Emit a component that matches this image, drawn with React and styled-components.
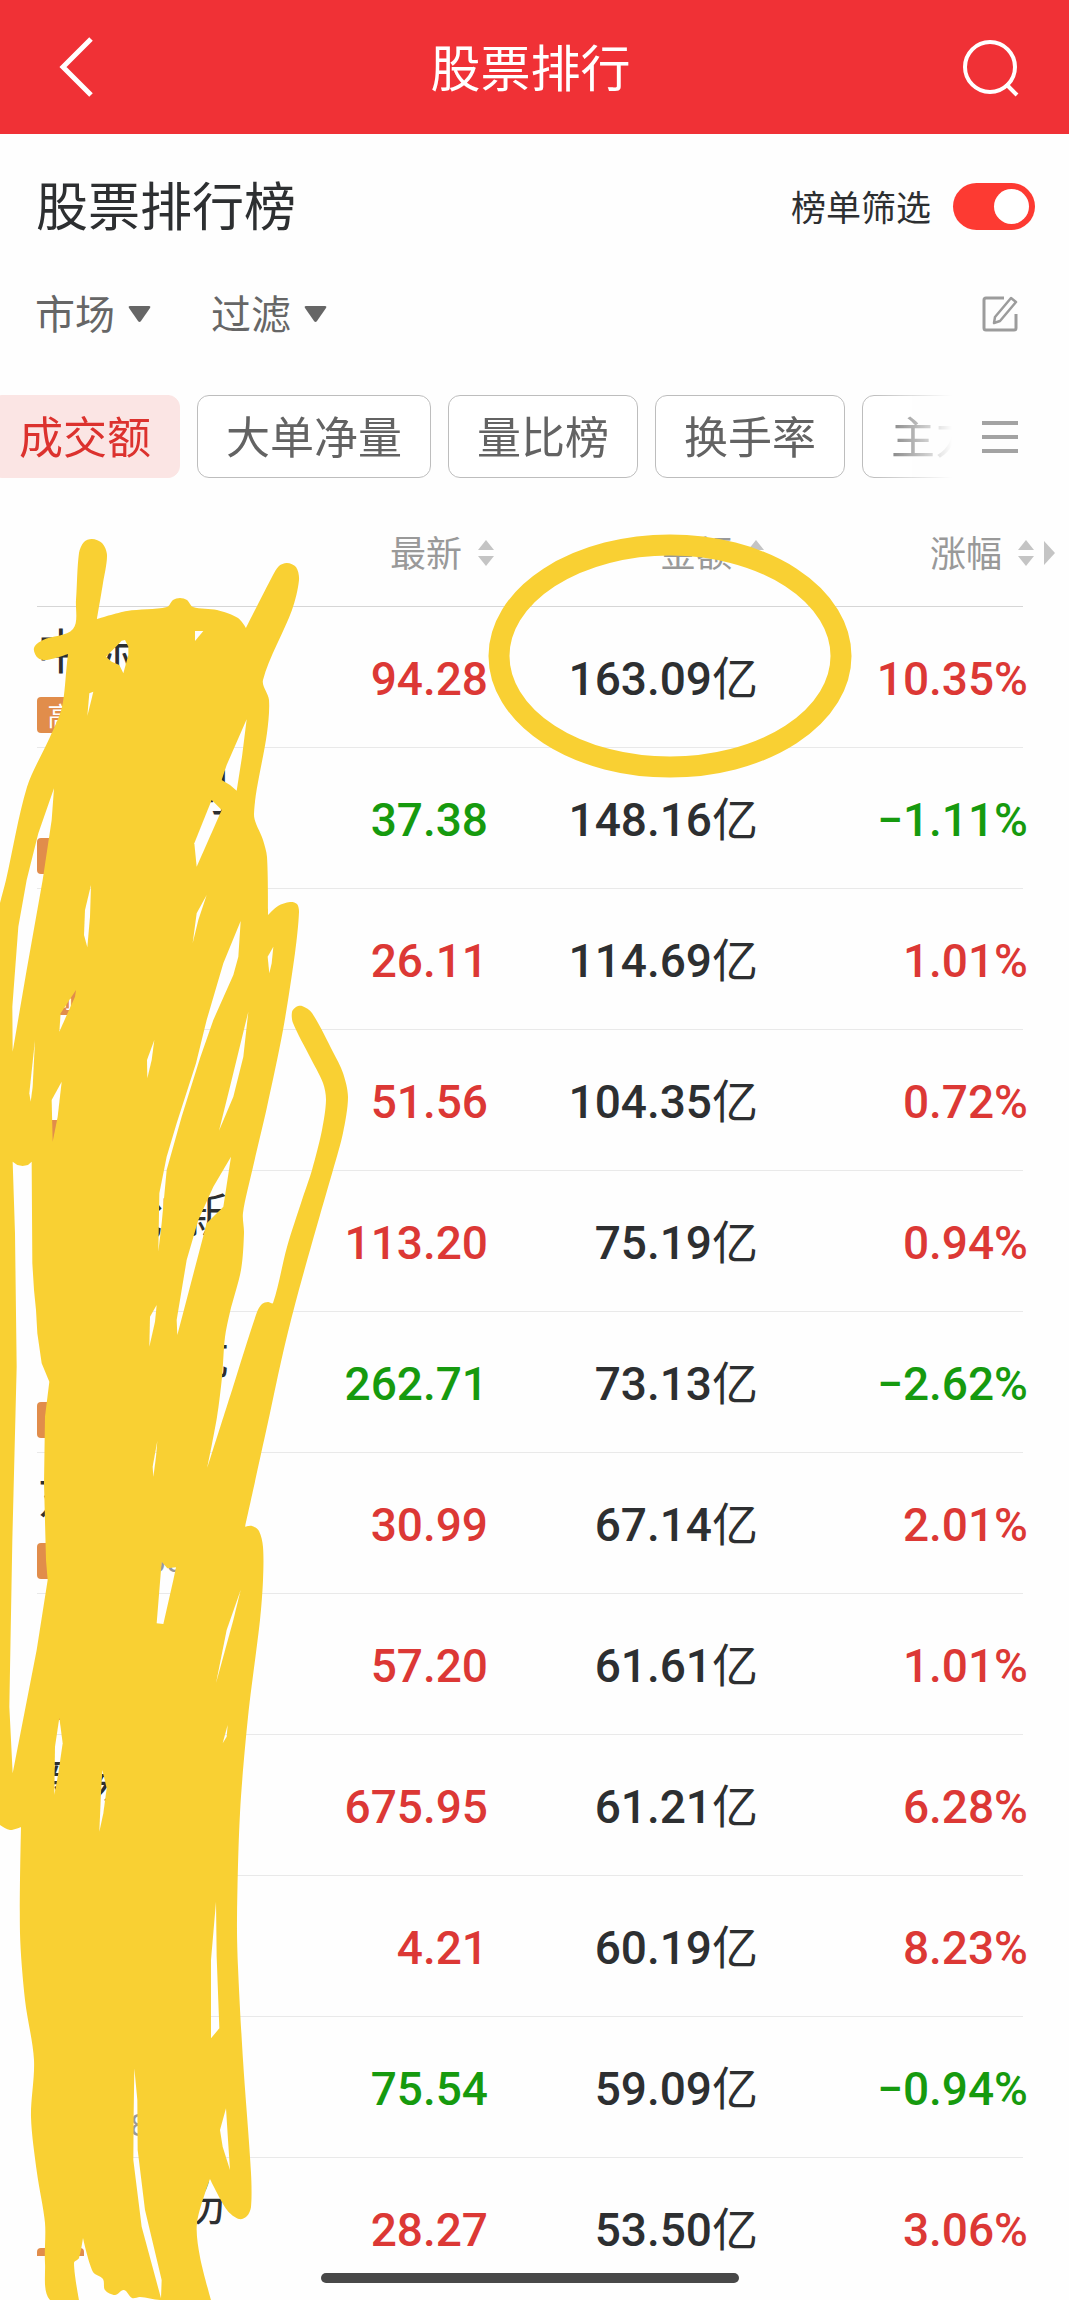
import React, { useState } from "react";
import styled, { createGlobalStyle } from "styled-components";

const GlobalStyle = createGlobalStyle`
  *, *::before, *::after { box-sizing: border-box; }
  body {
    margin: 0;
    background: #fefefe;
    font-family: "Noto Sans CJK SC", sans-serif;
    color: #2d2f31;
  }
  button, select, input { font: inherit; color: inherit; margin: 0; }
  button { border: 0; padding: 0; background: none; cursor: pointer; }
`;

const Screen = styled.div`
  position: relative;
  display: flex;
  flex-direction: column;
  height: 100vh;
  overflow: hidden;
`;

const NavBar = styled.header`
  flex: none;
  display: grid;
  grid-template-columns: 112px 1fr 128px;
  align-items: center;
  height: 134px;
  padding: 0 46px 0 54px;
  background: #f03136;
  color: #fff;
`;

const NavTitle = styled.h1`
  margin: 0;
  padding-bottom: 4px;
  font-size: 50px;
  line-height: 60px;
  font-weight: 400;
  text-align: center;
`;

const NavButton = styled.button`
  display: flex;
  justify-self: ${(p) => p.$side};
`;

const TitleRow = styled.section`
  flex: none;
  display: flex;
  align-items: center;
  justify-content: space-between;
  height: 144px;
  padding: 0 34px 0 36px;
`;

const Heading = styled.h2`
  margin: 0;
  padding-bottom: 4px;
  font-size: 52px;
  line-height: 60px;
  font-weight: 400;
`;

const SwitchLabel = styled.label`
  display: flex;
  align-items: center;
  gap: 22px;
  font-size: 35px;
  line-height: 48px;
`;

const Switch = styled.input`
  appearance: none;
  display: flex;
  align-items: center;
  width: 82px;
  height: 47px;
  padding: 0 6px;
  border-radius: 24px;
  background: ${(p) => (p.checked ? "#fd3a32" : "#ccc")};
  justify-content: ${(p) => (p.checked ? "flex-end" : "flex-start")};
  &::before {
    content: "";
    width: 35px;
    height: 35px;
    border-radius: 50%;
    background: #fff;
  }
`;

const FilterRow = styled.section`
  flex: none;
  display: flex;
  align-items: center;
  gap: 60px;
  height: 72px;
  padding: 0 51px 0 35px;
`;

const Filter = styled.label`
  display: flex;
  align-items: center;
  gap: 13px;
  color: #666;
`;

const FilterSelect = styled.select`
  appearance: none;
  border: 0;
  padding: 0 0 4px;
  background: none;
  font-size: 40px;
  line-height: 60px;
`;

const EditButton = styled.button`
  display: flex;
  margin-left: auto;
`;

const TabRow = styled.nav`
  flex: none;
  display: flex;
  align-items: center;
  padding: 45px 51px 20px 0;
`;

const TabTrack = styled.div`
  flex: 1;
  min-width: 0;
  overflow: hidden;
  margin-right: 30px;
  mask-image: linear-gradient(to right, #000 calc(100% - 80px), transparent);
`;

const TabList = styled.div`
  display: flex;
  gap: 17px;
  margin-left: -10px;
`;

const Tab = styled.button`
  flex: none;
  height: 83px;
  padding: 0 28px 4px;
  border: 1px solid ${(p) => (p.$active ? "#fbe5e4" : "#bdbdbd")};
  border-radius: 12px;
  background: ${(p) => (p.$active ? "#fbe5e4" : "#fff")};
  color: ${(p) => (p.$active ? "#dc322e" : "#636363")};
  font-size: 44px;
  line-height: 60px;
  white-space: nowrap;
`;

const MenuButton = styled.button`
  display: flex;
`;

const ListArea = styled.main`
  flex: 1 1 0;
  min-height: 0;
  overflow: hidden;
`;

const Table = styled.table`
  width: calc(100% - 37px);
  margin-left: 37px;
  table-layout: fixed;
  border-collapse: collapse;
`;

const Row = styled.tr`
  height: ${(p) => (p.$head ? 109 : 141)}px;
  background: linear-gradient(${(p) => (p.$head ? "#d6d6d6, #d6d6d6" : "#e9e9e9, #e9e9e9")})
    left bottom / calc(100% - 46px) 1px no-repeat;
`;

const HeadCell = styled.th`
  width: ${(p) => p.$width || "auto"};
  padding: 0 ${(p) => p.$end || 0}px 0 0;
  font-weight: 400;
`;

const SortButton = styled.button`
  display: flex;
  align-items: center;
  gap: 16px;
  margin-left: auto;
  color: #999;
  font-size: 36px;
  line-height: 48px;
`;

const SortLabel = styled.span`
  padding-bottom: 4px;
`;

const NameCell = styled.td`
  padding: 0;
  vertical-align: top;
`;

const StockName = styled.div`
  padding-top: 15px;
  height: 90px;
  font-size: 48px;
  line-height: 52px;
  font-weight: 400;
  white-space: pre;
`;

const StockMeta = styled.div`
  display: flex;
  align-items: center;
  gap: 10px;
  height: 36px;
  color: #999;
  font: 32px/36px Roboto, sans-serif;
`;

const Badge = styled.span`
  display: flex;
  align-items: center;
  justify-content: center;
  width: 47px;
  height: 36px;
  border-radius: 4px;
  background: #e18d4b;
  color: #fff;
  font: 26px/36px "Noto Sans CJK SC", sans-serif;
`;

const tones = { up: "#dc3835", down: "#169a0e", plain: "#2d2f31" };

const ValueCell = styled.td`
  padding: 2px ${(p) => p.$end}px 0 0;
  text-align: right;
  color: ${(p) => tones[p.$tone]};
  font-family: Roboto, "Noto Sans CJK SC", sans-serif;
  font-size: 46px;
  line-height: 60px;
  font-weight: 500;
  white-space: nowrap;
`;

const Unit = styled.span`
  font-weight: 400;
`;

const HomeArea = styled.footer`
  flex: none;
  display: flex;
  justify-content: center;
  height: 44px;
  padding-top: 17px;
  padding-right: 9px;
`;

const HomeBar = styled.div`
  width: 39.500%;
  height: 10px;
  border-radius: 5px;
  background: #484848;
`;

const Marker = styled.svg`
  position: absolute;
  top: ${(p) => p.$top}px;
  left: ${(p) => p.$left || "auto"};
  right: ${(p) => p.$right || "auto"};
  pointer-events: none;
`;

const Triangle = () => (
  <svg width="23" height="18" viewBox="0 0 23 18" aria-hidden="true">
    <path d="M2 1h19q2 0 1 2L13 16q-1.500 2-3 0L1 3q-1-2 1-2z" fill="#666" />
  </svg>
);

const SortIcon = () => (
  <svg width="16" height="26" viewBox="0 0 16 26" aria-hidden="true">
    <path d="M8 0l8 10H0zM8 26l8-10H0z" fill="#c4c4c4" />
  </svg>
);

const rows = [
  { name: "中际", badge: "高", price: "94.28", amount: "163.09", change: "10.35%", tone: "up" },
  { name: "　　　利", code: "　  8", price: "37.38", amount: "148.16", change: "−1.11%", tone: "down" },
  { badge: "高", price: "26.11", amount: "114.69", change: "1.01%", tone: "up" },
  { price: "51.56", amount: "104.35", change: "0.72%", tone: "up" },
  { name: "　　创新", price: "113.20", amount: "75.19", change: "0.94%", tone: "up" },
  { name: "　　　优", price: "262.71", amount: "73.13", change: "−2.62%", tone: "down" },
  { name: "东", code: "300003", price: "30.99", amount: "67.14", change: "2.01%", tone: "up" },
  { price: "57.20", amount: "61.61", change: "1.01%", tone: "up" },
  { name: "新易", price: "675.95", amount: "61.21", change: "6.28%", tone: "up" },
  { price: "4.21", amount: "60.19", change: "8.23%", tone: "up" },
  { code: "008", price: "75.54", amount: "59.09", change: "−0.94%", tone: "down" },
  { name: "　　　份", price: "28.27", amount: "53.50", change: "3.06%", tone: "up" },
];

const outline = [
  34,648, 43,640, 73,629, 76,600, 79,553, 84,542, 92,539, 102,543, 107,555, 103,583, 97,619, 127,611,
  167,607, 173,600, 180,598, 187,600, 193,607, 217,610, 238,618, 246,628, 273,575, 279,566, 287,563,
  296,567, 299,580, 292,610, 263,680, 269,700, 267,733, 254,814, 263,840, 267,857, 268,915, 278,906,
  290,902, 297,904, 299,912, 295,953, 283,1030, 267,1107, 253,1167, 243,1213, 244,1233, 241,1270,
  230,1312, 225,1337, 222,1377, 217,1417, 207,1469, 233,1387, 257,1312, 262,1304, 268,1302, 273,1303,
  287,1247, 302,1200, 312,1170, 322,1130, 326,1100, 323,1083, 310,1057, 293,1023, 292,1012, 296,1007,
  302,1006, 312,1013, 333,1052, 343,1073, 348,1097, 343,1133, 333,1170, 320,1215, 297,1297, 283,1353,
  270,1413, 245,1527, 252,1526, 259,1531, 263,1547, 263,1580, 260,1620, 248,1717, 240,1813, 237,1920,
  238,1967, 243,2060, 251,2173, 251,2207, 247,2216, 239,2219, 227,2210, 210,2179, 197,2223, 200,2257,
  211,2300, 160,2300, 140,2297, 132,2298, 124,2290, 115,2295, 105,2290, 103,2279, 93,2272, 83,2238,
  79,2258, 74,2263, 79,2300, 50,2300, 45,2263, 45,2223, 37,2173, 31,2117, 34,2060, 25,2000, 20,1933,
  21,1827, 10,1830, 0,1825, -6,1820, -6,930, 0,903, 6,880, 27,787, 50,737, 62,707, 67,663, 68,654, 47,660,
  38,658,
];

// Each group: vertical start of a strip, then its gaps at three units per pixel.
const gaps = [
  [520, [
    "162,805 155,900 128,1080 80,1350 38,1595 37,1460 55,1220 80,1080 115,940",
    "318,410 350,378 365,362 375,360 385,380 385,405 370,460 358,435 335,425", "268,520 280,515 262,588",
    "585,333 610,333 585,363", "740,598 726,710 710,812 690,795 665,780 680,735", "635,840 665,870 590,1040 583,970",
  ]],
  [860, [
    "38,905 52,915 68,918 84,915 95,905 97,1210 102,1290 108,1350 112,1420 125,1510 148,1565 135,1670 132,1870 138,2100 143,2160 110,2370 38,2740 28,2540 37,2040 50,1520 45,1120",
    "273,75 270,170 262,262 252,225 255,150", "620,105 595,180 578,250 590,160",
    "722,183 715,290 700,345 640,480 600,595 545,770 500,930 485,1090 475,1175 478,1000 500,890 530,790 588,610 620,480 670,310",
    "820,260 815,310 808,340 803,290", "228,390 225,410 178,515 182,460", "745,455 730,590 700,710 657,812 690,680",
    "105,540 98,680 92,725 88,700", "463,540 455,600 442,655 441,600", "185,665 173,770 158,845 155,720",
    "693,890 670,1040 620,1090 570,1280 532,1425 530,1380 560,1200 595,1080 640,980",
  ]],
  [1200, ["470,315 465,365 448,440 450,350", "472,722 468,770 460,830 458,800"]],
  [1540, [
    "485,65 502,85 528,82 520,120 490,252 470,250", "722,150 700,240 648,430 680,270", "683,555 680,590 668,610",
    "178,533 188,610 175,700 163,765 165,620", "307,690 320,745 310,820 298,875 303,760",
  ]],
  [1900, [
    "648,5 650,170 658,385 633,415 633,180", "403,505 412,600 413,750 435,930 485,1140 483,1195 425,980 400,780 401,640",
    "678,625 684,720 690,810 668,740 660,690",
  ]],
];

function smoothPath(flat) {
  const pts = [];
  for (let i = 0; i < flat.length; i += 2) pts.push([flat[i], flat[i + 1]]);
  const n = pts.length;
  let d = `M${pts[0]}`;
  for (let i = 0; i < n; i++) {
    const [a, b, c, e] = [pts[(i + n - 1) % n], pts[i], pts[(i + 1) % n], pts[(i + 2) % n]];
    const len = Math.hypot(c[0] - b[0], c[1] - b[1]);
    // Corners sharper than a right angle stay pointed.
    const tangent = (p, m, q) => {
      const dot = (m[0] - p[0]) * (q[0] - m[0]) + (m[1] - p[1]) * (q[1] - m[1]);
      const l = Math.hypot(q[0] - p[0], q[1] - p[1]) || 1;
      const k = dot < 0 ? 0 : (len * 0.3) / l;
      return [(q[0] - p[0]) * k, (q[1] - p[1]) * k];
    };
    const t1 = tangent(a, b, c);
    const t2 = tangent(b, c, e);
    d += `C${b[0] + t1[0]},${b[1] + t1[1]} ${c[0] - t2[0]},${c[1] - t2[1]} ${c}`;
  }
  return d + "Z";
}

function Scribble() {
  return (
    <Marker $top={0} $left="0" width="360" height="2300" viewBox="0 0 360 2300" aria-hidden="true">
      <mask id="gaps" maskUnits="userSpaceOnUse" x="0" y="0" width="360" height="2300">
        <rect width="360" height="2300" fill="#fff" />
        {gaps.map(([top, shapes]) => (
          <g key={top} transform={`translate(0 ${top}) scale(${1 / 3})`}>
            {shapes.map((s) => <polygon key={s} points={s} fill="#000" />)}
          </g>
        ))}
      </mask>
      <path d={smoothPath(outline)} fill="#f9d033" mask="url(#gaps)" />
    </Marker>
  );
}

function SortHead({ label, more, ...rest }) {
  return (
    <HeadCell scope="col" {...rest}>
      <SortButton type="button">
        <SortLabel>{label}</SortLabel>
        <SortIcon />
        {more && (
          <MoreArrow width="11" height="24" viewBox="0 0 11 24" aria-hidden="true">
            <path d="M0 0l11 12L0 24z" fill="#c4c4c4" />
          </MoreArrow>
        )}
      </SortButton>
    </HeadCell>
  );
}

const MoreArrow = styled.svg`
  margin-left: -6px;
`;

const tabs = ["成交额", "大单净量", "量比榜", "换手率", "主力净流入"];

export default function App() {
  const [filtered, setFiltered] = useState(true);
  const [active, setActive] = useState(0);
  return (
    <Screen>
      <GlobalStyle />
      <NavBar>
        <NavButton type="button" $side="start" aria-label="返回">
          <svg width="46" height="64" viewBox="0 0 46 64" fill="none" stroke="#fff" strokeWidth="5">
            <path d="M37 4L9 32l28 28" />
          </svg>
        </NavButton>
        <NavTitle>股票排行</NavTitle>
        <NavButton type="button" $side="end" aria-label="搜索">
          <svg width="60" height="60" viewBox="0 0 60 60" fill="none" stroke="#fff" strokeWidth="4">
            <circle cx="27" cy="30" r="25" />
            <path d="M43 47l11 11" />
          </svg>
        </NavButton>
      </NavBar>

      <TitleRow>
        <Heading>股票排行榜</Heading>
        <SwitchLabel>
          榜单筛选
          <Switch type="checkbox" role="switch" checked={filtered} onChange={(e) => setFiltered(e.target.checked)} />
        </SwitchLabel>
      </TitleRow>

      <FilterRow>
        {["市场", "过滤"].map((name) => (
          <Filter key={name}>
            <FilterSelect aria-label={name}>
              <option>{name}</option>
            </FilterSelect>
            <Triangle />
          </Filter>
        ))}
        <EditButton type="button" aria-label="编辑">
          <svg width="36" height="36" viewBox="0 0 36 36" fill="none" stroke="#9c9c9c" strokeWidth="3" strokeLinejoin="round">
            <path d="M22 2H4q-2 0-2 2v28q0 2 2 2h28q2 0 2-2V18" />
            <path d="M29 2l5 4-16 19-6 2 1-6z" strokeWidth="2.500" />
          </svg>
        </EditButton>
      </FilterRow>

      <TabRow>
        <TabTrack>
          <TabList>
            {tabs.map((t, i) => (
              <Tab key={t} type="button" $active={i === active} onClick={() => setActive(i)}>{t}</Tab>
            ))}
          </TabList>
        </TabTrack>
        <MenuButton type="button" aria-label="更多榜单">
          <svg width="36" height="34" viewBox="0 0 36 34" stroke="#a3a3a3" strokeWidth="4">
            <path d="M0 3h36M0 17h36M0 31h36" />
          </svg>
        </MenuButton>
      </TabRow>

      <ListArea>
        <Table>
          <thead>
            <Row $head>
              <HeadCell scope="col" aria-label="名称" />
              <SortHead label="最新" $width="240px" />
              <SortHead label="金额" $width="270px" />
              <SortHead label="涨幅" $width="305px" $end={14} more />
            </Row>
          </thead>
          <tbody>
            {rows.map(({ name, badge, code, price, amount, change, tone }) => (
              <Row key={price}>
                <NameCell>
                  <StockName>{name}</StockName>
                  <StockMeta><Badge>{badge}</Badge>{code}</StockMeta>
                </NameCell>
                <ValueCell $end={6} $tone={tone}>{price}</ValueCell>
                <ValueCell $end={6} $tone="plain">{amount}<Unit>亿</Unit></ValueCell>
                <ValueCell $end={41} $tone={tone}>{change}</ValueCell>
              </Row>
            ))}
          </tbody>
        </Table>
      </ListArea>

      <HomeArea>
        <HomeBar />
      </HomeArea>

      <Scribble />
      <Marker $top={534} $right="217px" width="364" height="244" viewBox="0 0 364 244" aria-hidden="true">
        <ellipse cx="182" cy="122" rx="171" ry="111" fill="none" stroke="#f9d033" strokeWidth="21" />
      </Marker>
    </Screen>
  );
}
